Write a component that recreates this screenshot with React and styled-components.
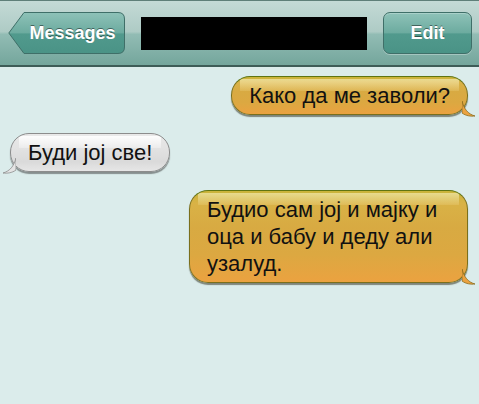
import React from 'react'
import styled, { createGlobalStyle, css } from 'styled-components'

const GlobalStyle = createGlobalStyle`
  html, body {
    margin: 0;
    padding: 0;
    background: #dbeceb;
  }
  body {
    font-family: 'Liberation Sans', Arial, sans-serif;
  }
`

const Screen = styled.div`
  width: 479px;
  height: 404px;
  background: #dbeceb;
  overflow: hidden;
`

const NavBar = styled.div`
  height: 67px;
  box-sizing: border-box;
  display: flex;
  align-items: center;
  gap: 16px;
  padding: 0 7px 0 8px;
  background: linear-gradient(#c4dad6 0%, #aecbc5 48%, #92bcb4 52%, #74a69c 100%);
  border-top: 1px solid #5f7f79;
  border-bottom: 2px solid #3d5c57;
`

const navButton = css`
  height: 42px;
  box-sizing: border-box;
  display: flex;
  align-items: center;
  justify-content: center;
  color: #fff;
  font-weight: bold;
  font-size: 18px;
  text-shadow: 0 -1px 0 rgba(0, 0, 0, 0.45);
`

const BackButton = styled.div`
  ${navButton};
  position: relative;
  width: 117px;
  padding-left: 12px;
`

const BackShape = styled.svg`
  position: absolute;
  inset: 0;
  width: 117px;
  height: 42px;
  z-index: 0;
`

const Label = styled.span`
  position: relative;
  z-index: 1;
`

const Title = styled.div`
  flex: 1;
  height: 33px;
  background: #000;
`

const EditButton = styled.div`
  ${navButton};
  width: 89px;
  border-radius: 7px;
  border: 1px solid #3f6f68;
  background: linear-gradient(#8ec2b8 0%, #6cab9f 50%, #519a8d 52%, #4a9386 100%);
  box-shadow: inset 0 1px 0 rgba(255, 255, 255, 0.25), 0 1px 0 rgba(255, 255, 255, 0.3);
`

const Thread = styled.div`
  display: flex;
  flex-direction: column;
  padding: 9px 11px 0 10px;
`

const Row = styled.div`
  display: flex;
  justify-content: ${p => (p.$mine ? 'flex-end' : 'flex-start')};
  margin-bottom: ${p => p.$gap}px;
`

const Bubble = styled.div`
  position: relative;
  max-width: 243px;
  padding: 5px 17px 5px 17px;
  font-size: 22px;
  line-height: 27px;
  color: #111;
  border-radius: 19px;
  ${p =>
    p.$mine
      ? css`
          background:
            linear-gradient(rgba(255, 250, 210, 0.55), rgba(255, 240, 180, 0.15)) 8px 2px / calc(100% - 16px) 12px no-repeat,
            linear-gradient(#c9b43a 0%, #d9b246 14%, #d8aa42 40%, #dca841 70%, #eba240 100%);
          border: 1px solid #7a6f1c;
          border-top-color: #5f7412;
          box-shadow: 0 2px 1px rgba(50, 50, 30, 0.55);
        `
      : css`
          background:
            linear-gradient(rgba(255, 255, 255, 0.9), rgba(255, 255, 255, 0.3)) 8px 2px / calc(100% - 16px) 12px no-repeat,
            linear-gradient(#e9e9e9 0%, #e2e2e2 40%, #dadada 75%, #e6e6e6 100%);
          border: 1px solid #8c8c8c;
          box-shadow: 0 2px 1px rgba(50, 50, 50, 0.5);
        `}
`

const Tail = styled.svg`
  position: absolute;
  bottom: -3px;
  width: 14px;
  height: 16px;
  ${p => (p.$mine ? 'right: -9px;' : 'left: -9px; transform: scaleX(-1);')}
`

const Message = ({ mine, gap, children }) => (
  <Row $mine={mine} $gap={gap}>
    <Bubble $mine={mine}>
      {children}
      <Tail $mine={mine} viewBox="0 0 14 16">
        <path
          d="M0 0 C2 8 6 13 13 15 C9 15.5 4 15 0 12 Z"
          fill={mine ? '#eba240' : '#e4e4e4'}
          stroke={mine ? '#8a6d20' : '#8c8c8c'}
          strokeWidth="0.8"
        />
      </Tail>
    </Bubble>
  </Row>
)

const App = () => (
  <Screen>
    <GlobalStyle />
    <NavBar>
      <BackButton>
        <BackShape viewBox="0 0 117 42">
          <defs>
            <linearGradient id="backFill" x1="0" y1="0" x2="0" y2="1">
              <stop offset="0" stopColor="#8ec2b8" />
              <stop offset="0.5" stopColor="#6cab9f" />
              <stop offset="0.52" stopColor="#519a8d" />
              <stop offset="1" stopColor="#4a9386" />
            </linearGradient>
          </defs>
          <path
            d="M16 0.5 H110 Q116.5 0.5 116.5 7 V35 Q116.5 41.5 110 41.5 H16 L0.8 21 Z"
            fill="url(#backFill)"
            stroke="#3f6f68"
            strokeWidth="1"
          />
        </BackShape>
        <Label>Messages</Label>
      </BackButton>
      <Title />
      <EditButton>Edit</EditButton>
    </NavBar>
    <Thread>
      <Message mine gap={18}>Како да ме заволи?</Message>
      <Message gap={18}>Буди јој све!</Message>
      <Message mine gap={0}>Будио сам јој и мајку и оца и бабу и деду али узалуд.</Message>
    </Thread>
  </Screen>
)

export default App
